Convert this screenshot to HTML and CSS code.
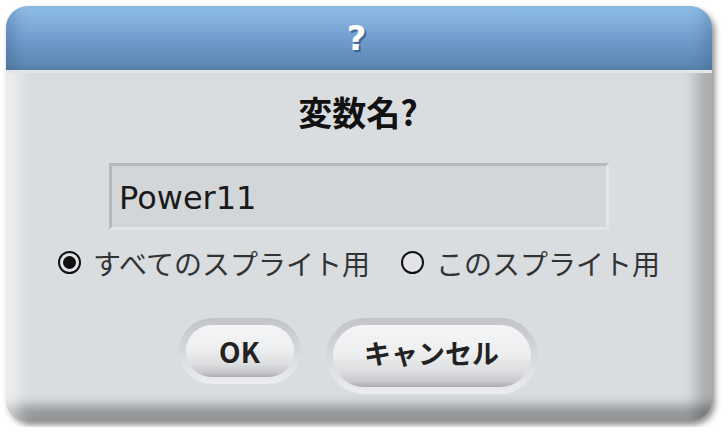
FILE: index.html
```html
<!DOCTYPE html>
<html lang="ja">
<head>
<meta charset="utf-8">
<title>?</title>
<link rel="stylesheet" href="styles.css">
</head>
<body>
<div class="page">
  <div class="dialog">
    <div class="titlebar"><span class="title">?</span></div>
    <div class="content">
      <div class="heading">変数名?</div>
      <div class="field"><span class="field-text">Power11</span></div>
      <div class="radios">
        <div class="opt"><span class="radio on"></span><span class="opt-label">すべてのスプライト用</span></div>
        <div class="opt"><span class="radio"></span><span class="opt-label">このスプライト用</span></div>
      </div>
      <div class="buttons">
        <div class="well"><div class="btn btn-ok">OK</div></div>
        <div class="well"><div class="btn btn-cancel">キャンセル</div></div>
      </div>
    </div>
  </div>
</div>
</body>
</html>
```

FILE: styles.css
```css
html, body {
  margin: 0;
  background: #ffffff;
}
body {
  font-family: "Noto Sans CJK JP", "DejaVu Sans", sans-serif;
}
.page {
  padding: 6px;
}
.dialog {
  width: 706px;
  height: 415px;
  border-radius: 22px;
  overflow: hidden;
  background: #dadde0;
  box-shadow: 3px 4px 6px rgba(0, 0, 0, 0.45);
  display: flex;
  flex-direction: column;
}
.titlebar {
  height: 64px;
  flex: none;
  background: linear-gradient(#8fbee7, #6f9bcb 55%, #5a84ad);
  border-bottom: 3px solid #e3e5e8;
  display: flex;
  justify-content: center;
  align-items: flex-start;
  box-shadow: inset 18px 0 14px -10px rgba(40, 70, 110, 0.25), inset -18px 0 14px -10px rgba(40, 70, 110, 0.25);
}
.title {
  font-family: "DejaVu Sans", sans-serif;
  font-weight: bold;
  font-size: 34px;
  line-height: 40px;
  margin-top: 12px;
  margin-left: -5px;
  color: #ffffff;
  text-shadow: 2px 2px 0 rgba(45, 80, 120, 0.7);
}
.content {
  flex: 1;
  display: flex;
  flex-direction: column;
  align-items: center;
  box-shadow:
    inset 24px 0 16px -12px rgba(255, 255, 255, 0.55),
    inset -26px 0 14px -10px rgba(0, 0, 0, 0.22),
    inset 0 -26px 12px -10px rgba(0, 0, 0, 0.32);
}
.heading {
  margin-top: 19px;
  font-weight: bold;
  font-size: 34px;
  line-height: 40px;
  color: #111;
  margin-left: -2px;
}
.field {
  margin-top: 31px;
  width: 500px;
  height: 67px;
  box-sizing: border-box;
  background: #d3d6d9;
  border-top: 3px solid #b6b9bc;
  border-left: 3px solid #b6b9bc;
  border-bottom: 3px solid #e3e6e9;
  border-right: 3px solid #e3e6e9;
  display: flex;
  align-items: center;
  padding-left: 7px;
}
.field-text {
  font-family: "DejaVu Sans", sans-serif;
  font-size: 32px;
  line-height: 40px;
  color: #1a1a1a;
  margin-top: 2px;
}
.radios {
  margin-top: 17px;
  height: 30px;
  display: flex;
  align-items: center;
  gap: 31px;
  margin-left: 0;
}
.opt {
  display: flex;
  align-items: center;
  gap: 12px;
}
.radio {
  width: 23px;
  height: 23px;
  box-sizing: border-box;
  border-radius: 50%;
  border: 2px solid #111;
  background: #e2e4ea;
  display: flex;
  align-items: center;
  justify-content: center;
}
.radio.on::after {
  content: "";
  width: 13px;
  height: 13px;
  border-radius: 50%;
  background: #111;
}
.opt-label {
  font-size: 28px;
  line-height: 30px;
  color: #333;
  margin-top: 2px;
}
.buttons {
  margin-top: 41px;
  display: flex;
  align-items: flex-start;
  gap: 25px;
  margin-left: -2px;
}
.well {
  padding: 7px;
  border-radius: 40px;
  background: linear-gradient(#c2c4c7, #d6d8db 50%, #ebedef);
}
.btn {
  border-radius: 32px;
  background: linear-gradient(#f4f5f6 0%, #eeeff0 45%, #dcdee0 75%, #c4c6c9 92%, #a9abae 100%);
  display: flex;
  align-items: center;
  justify-content: center;
  font-weight: bold;
  color: #222;
}
.btn-ok {
  width: 108px;
  height: 52px;
  font-size: 28px;
  line-height: 30px;
}
.btn-cancel {
  width: 198px;
  height: 62px;
  font-size: 27px;
  line-height: 30px;
  padding-bottom: 6px;
  box-sizing: border-box;
}
```
